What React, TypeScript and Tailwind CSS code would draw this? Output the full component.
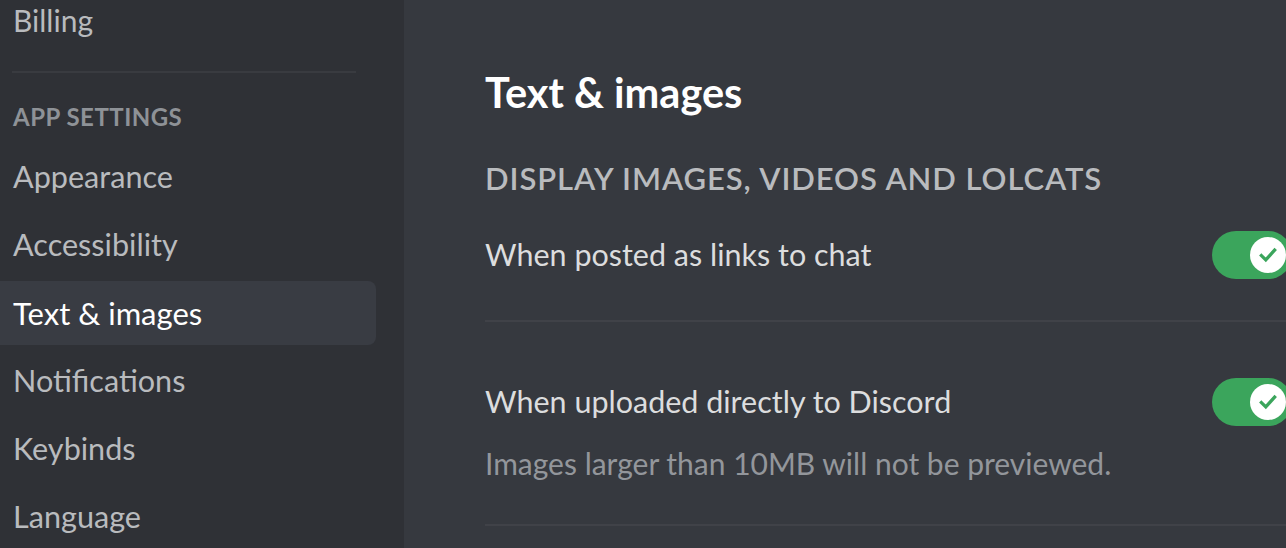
import React from "react";

const font = { fontFamily: "Lato, 'Open Sans', sans-serif" };

function Toggle() {
  return (
    <div className="relative h-[48px] w-[80px] shrink-0 rounded-full bg-[#3ba55c]">
      <div className="absolute right-[6px] top-[6px] flex h-[36px] w-[36px] items-center justify-center rounded-full bg-white">
        <svg width="22" height="22" viewBox="0 0 20 20" fill="none">
          <path d="M4 10.5 L8 14.5 L16 5.5" stroke="#3ba55c" strokeWidth="3" strokeLinecap="square" />
        </svg>
      </div>
    </div>
  );
}

const items = ["Appearance", "Accessibility", "Text & images", "Notifications", "Keybinds", "Language"];

export default function App() {
  return (
    <div className="flex h-[548px] w-[1286px] overflow-hidden" style={font}>
      <aside className="w-[404px] shrink-0 bg-[#2f3136]">
        <div className="mt-[-12px] flex w-[376px] flex-col">
          <div className="flex h-[64px] items-center pl-[13px] text-[30px] text-[#b9bbbe]">Billing</div>
          <div className="mx-[12px] mb-[16px] mt-[19px] h-[2px] w-[344px] bg-[#393b40]" />
          <div className="flex h-[52px] items-center pl-[13px] pt-[4px] text-[24px] font-bold uppercase tracking-[0.02em] text-[#8e9297]">
            App Settings
          </div>
          <div className="mt-[4px] flex flex-col gap-[4px]">
            {items.map((it) => (
              <div
                key={it}
                className={
                  it === "Text & images"
                    ? "flex h-[64px] items-center rounded-r-[8px] bg-[#393c43] pl-[13px] text-[31px] text-white"
                    : "flex h-[64px] items-center pl-[13px] text-[30.6px] text-[#b9bbbe]"
                }
              >
                {it}
              </div>
            ))}
          </div>
        </div>
      </aside>
      <main className="flex-1 bg-[#36393f] pl-[81px] pt-[68px]">
        <div className="w-[807px]">
          <h1 className="h-[48px] text-[41.5px] font-bold leading-[48px] text-white">Text &amp; images</h1>
          <h2 className="mt-[42px] h-[40px] text-[31px] font-semibold uppercase leading-[40px] tracking-[0.03em] text-[#b9bbbe]">
            Display images, videos and lolcats
          </h2>
          <div className="mt-[33px] flex h-[48px] items-center justify-between">
            <span className="text-[30.5px] text-[#dcddde]">When posted as links to chat</span>
            <Toggle />
          </div>
          <div className="mt-[41px] h-[2px] bg-[#404248]" />
          <div className="mt-[56px] flex h-[48px] items-center justify-between">
            <span className="text-[30.5px] text-[#dcddde]">When uploaded directly to Discord</span>
            <Toggle />
          </div>
          <div className="mt-[19px] h-[36px] text-[30px] leading-[36px] text-[#93969b]">
            Images larger than 10MB will not be previewed.
          </div>
          <div className="mt-[43px] h-[2px] bg-[#404248]" />
        </div>
      </main>
    </div>
  );
}
